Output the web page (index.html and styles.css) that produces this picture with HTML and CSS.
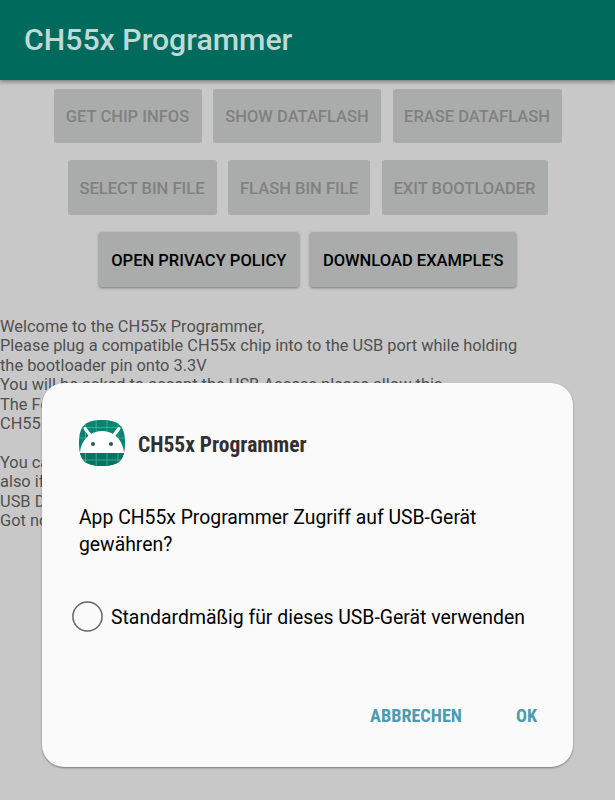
FILE: index.html
```html
<!DOCTYPE html>
<html lang="de">
<head>
<meta charset="utf-8">
<title>CH55x Programmer</title>
<link rel="stylesheet" href="styles.css">
</head>
<body>
<header class="appbar"><h1>CH55x Programmer</h1></header>
<main>
  <div class="rows">
    <div class="row"><button class="btn w148" disabled>GET CHIP INFOS</button><button class="btn w168" disabled>SHOW DATAFLASH</button><button class="btn w169" disabled>ERASE DATAFLASH</button></div>
    <div class="row"><button class="btn w149" disabled>SELECT BIN FILE</button><button class="btn w142" disabled>FLASH BIN FILE</button><button class="btn w166" disabled>EXIT BOOTLOADER</button></div>
    <div class="row"><button class="btn w200">OPEN PRIVACY POLICY</button><button class="btn w206">DOWNLOAD EXAMPLE'S</button></div>
  </div>
  <div class="log">Welcome to the CH55x Programmer,
Please plug a compatible CH55x chip into to the USB port while holding
the bootloader pin onto 3.3V
You will be asked to accept the USB Access please allow this.
The Fo
CH55

You ca
also if
USB D
Got no</div>
</main>
<section class="dialog">
  <div class="head">
    <svg class="logo" viewBox="0 0 46 46" aria-hidden="true">
      <defs><clipPath id="squircle"><path d="M23 0C40 0 46 6 46 23S40 46 23 46 0 40 0 23 6 0 23 0Z"/></clipPath></defs>
      <g clip-path="url(#squircle)">
        <path fill="#078571" d="M0 0h46v46H0z"/>
        <path fill="#007560" d="M0 33h46v13H0z"/>
        <path fill="none" stroke="#59ab9f" stroke-width=".8" d="M6.500 0v46M17.200 0v46M28 0v46M39 0v46M0 7.500h46M0 18h46M0 40h46"/>
        <path fill="#fff" d="M1 33C1.500 25 5.500 18.500 11 14.800C14.500 12.200 18.500 11 23 11s8.500 1.200 12 3.800C40.500 18.500 44.500 25 45 33Z"/>
        <path stroke="#fff" stroke-width="3.200" stroke-linecap="round" d="M6.200 8.800l5.500 7.200M39.800 8.800l-5.500 7.200"/>
        <circle cx="14" cy="24" r="2.100" fill="#315b55"/><circle cx="32" cy="24" r="2.100" fill="#315b55"/>
      </g>
    </svg>
    <h2>CH55x Programmer</h2>
  </div>
  <p class="message">App CH55x Programmer Zugriff auf USB-Gerät gewähren?</p>
  <label class="choice"><svg class="ring" viewBox="0 0 31 31"><circle cx="15.500" cy="15.500" r="14.600"/></svg><span class="choice-text">Standardmäßig für dieses USB-Gerät verwenden</span></label>
  <div class="actions"><button>ABBRECHEN</button><button>OK</button></div>
</section>
</body>
</html>
```
FILE: styles.css
```css
* { box-sizing: border-box; }
body { margin: 0; height: 800px; overflow: hidden; background: #c8c8c8; font-family: Roboto, sans-serif; }
button { font-family: inherit; border: 0; padding: 0; white-space: nowrap; }
.appbar { height: 80px; background: #006b5d; padding: 0 24px 2px; display: flex; align-items: center; box-shadow: 0 1px 5px rgba(0,0,0,.5); }
h1 { margin: 0; font-size: 30.250px; font-weight: 500; color: #bfdad6; }
.rows { padding-top: 8.500px; display: grid; gap: 17px; }
.row { display: flex; justify-content: center; gap: 11.500px; }
.btn { height: 54.800px; padding-top: 1.500px; border-radius: 3px; background: #aaacab; color: #000; font-size: 16.550px; font-weight: 500; box-shadow: 0 1px 3px rgba(0,0,0,.4); }
.btn:disabled { color: #808181; box-shadow: none; }
.w148 { width: 148px; }
.w168 { width: 168px; }
.w169 { width: 169px; }
.w149 { width: 149px; }
.w142 { width: 142px; }
.w166 { width: 166px; }
.w200 { width: 200px; }
.w206 { width: 206px; }
.log { margin-top: 30.200px; font-size: 16.400px; line-height: 19.400px; color: #505050; white-space: pre; }
.dialog { position: absolute; left: 42px; top: 383px; width: 531px; height: 384px; padding: 36px 36px 0 37px; border-radius: 22px; background: #fafafa; box-shadow: 0 1px 2px rgba(0,0,0,.4); display: flex; flex-direction: column; }
.head { display: flex; align-items: center; gap: 13px; height: 48px; }
.logo { width: 46px; height: 46px; }
h2 { margin: 3px 0 0; font-family: "Roboto Condensed", Roboto, sans-serif; font-stretch: 75%; font-size: 21.500px; font-weight: 700; color: #303030; }
.message { margin: 37px 0 0; font-size: 19.350px; line-height: 27px; color: #000; }
.choice { margin: 41px 0 0 -7px; display: flex; align-items: center; gap: 8px; height: 34px; font-size: 19.400px; color: #000; white-space: nowrap; }
.choice-text { padding-top: 2px; }
.ring { width: 31px; height: 31px; fill: none; stroke: #666; stroke-width: 1.500px; }
.actions { margin-top: 69px; display: flex; justify-content: flex-end; gap: 54px; height: 26px; }
.actions button { background: none; color: #4d9ab4; font-family: "Roboto Condensed", Roboto, sans-serif; font-stretch: 75%; font-size: 18.200px; font-weight: 700; }
```
